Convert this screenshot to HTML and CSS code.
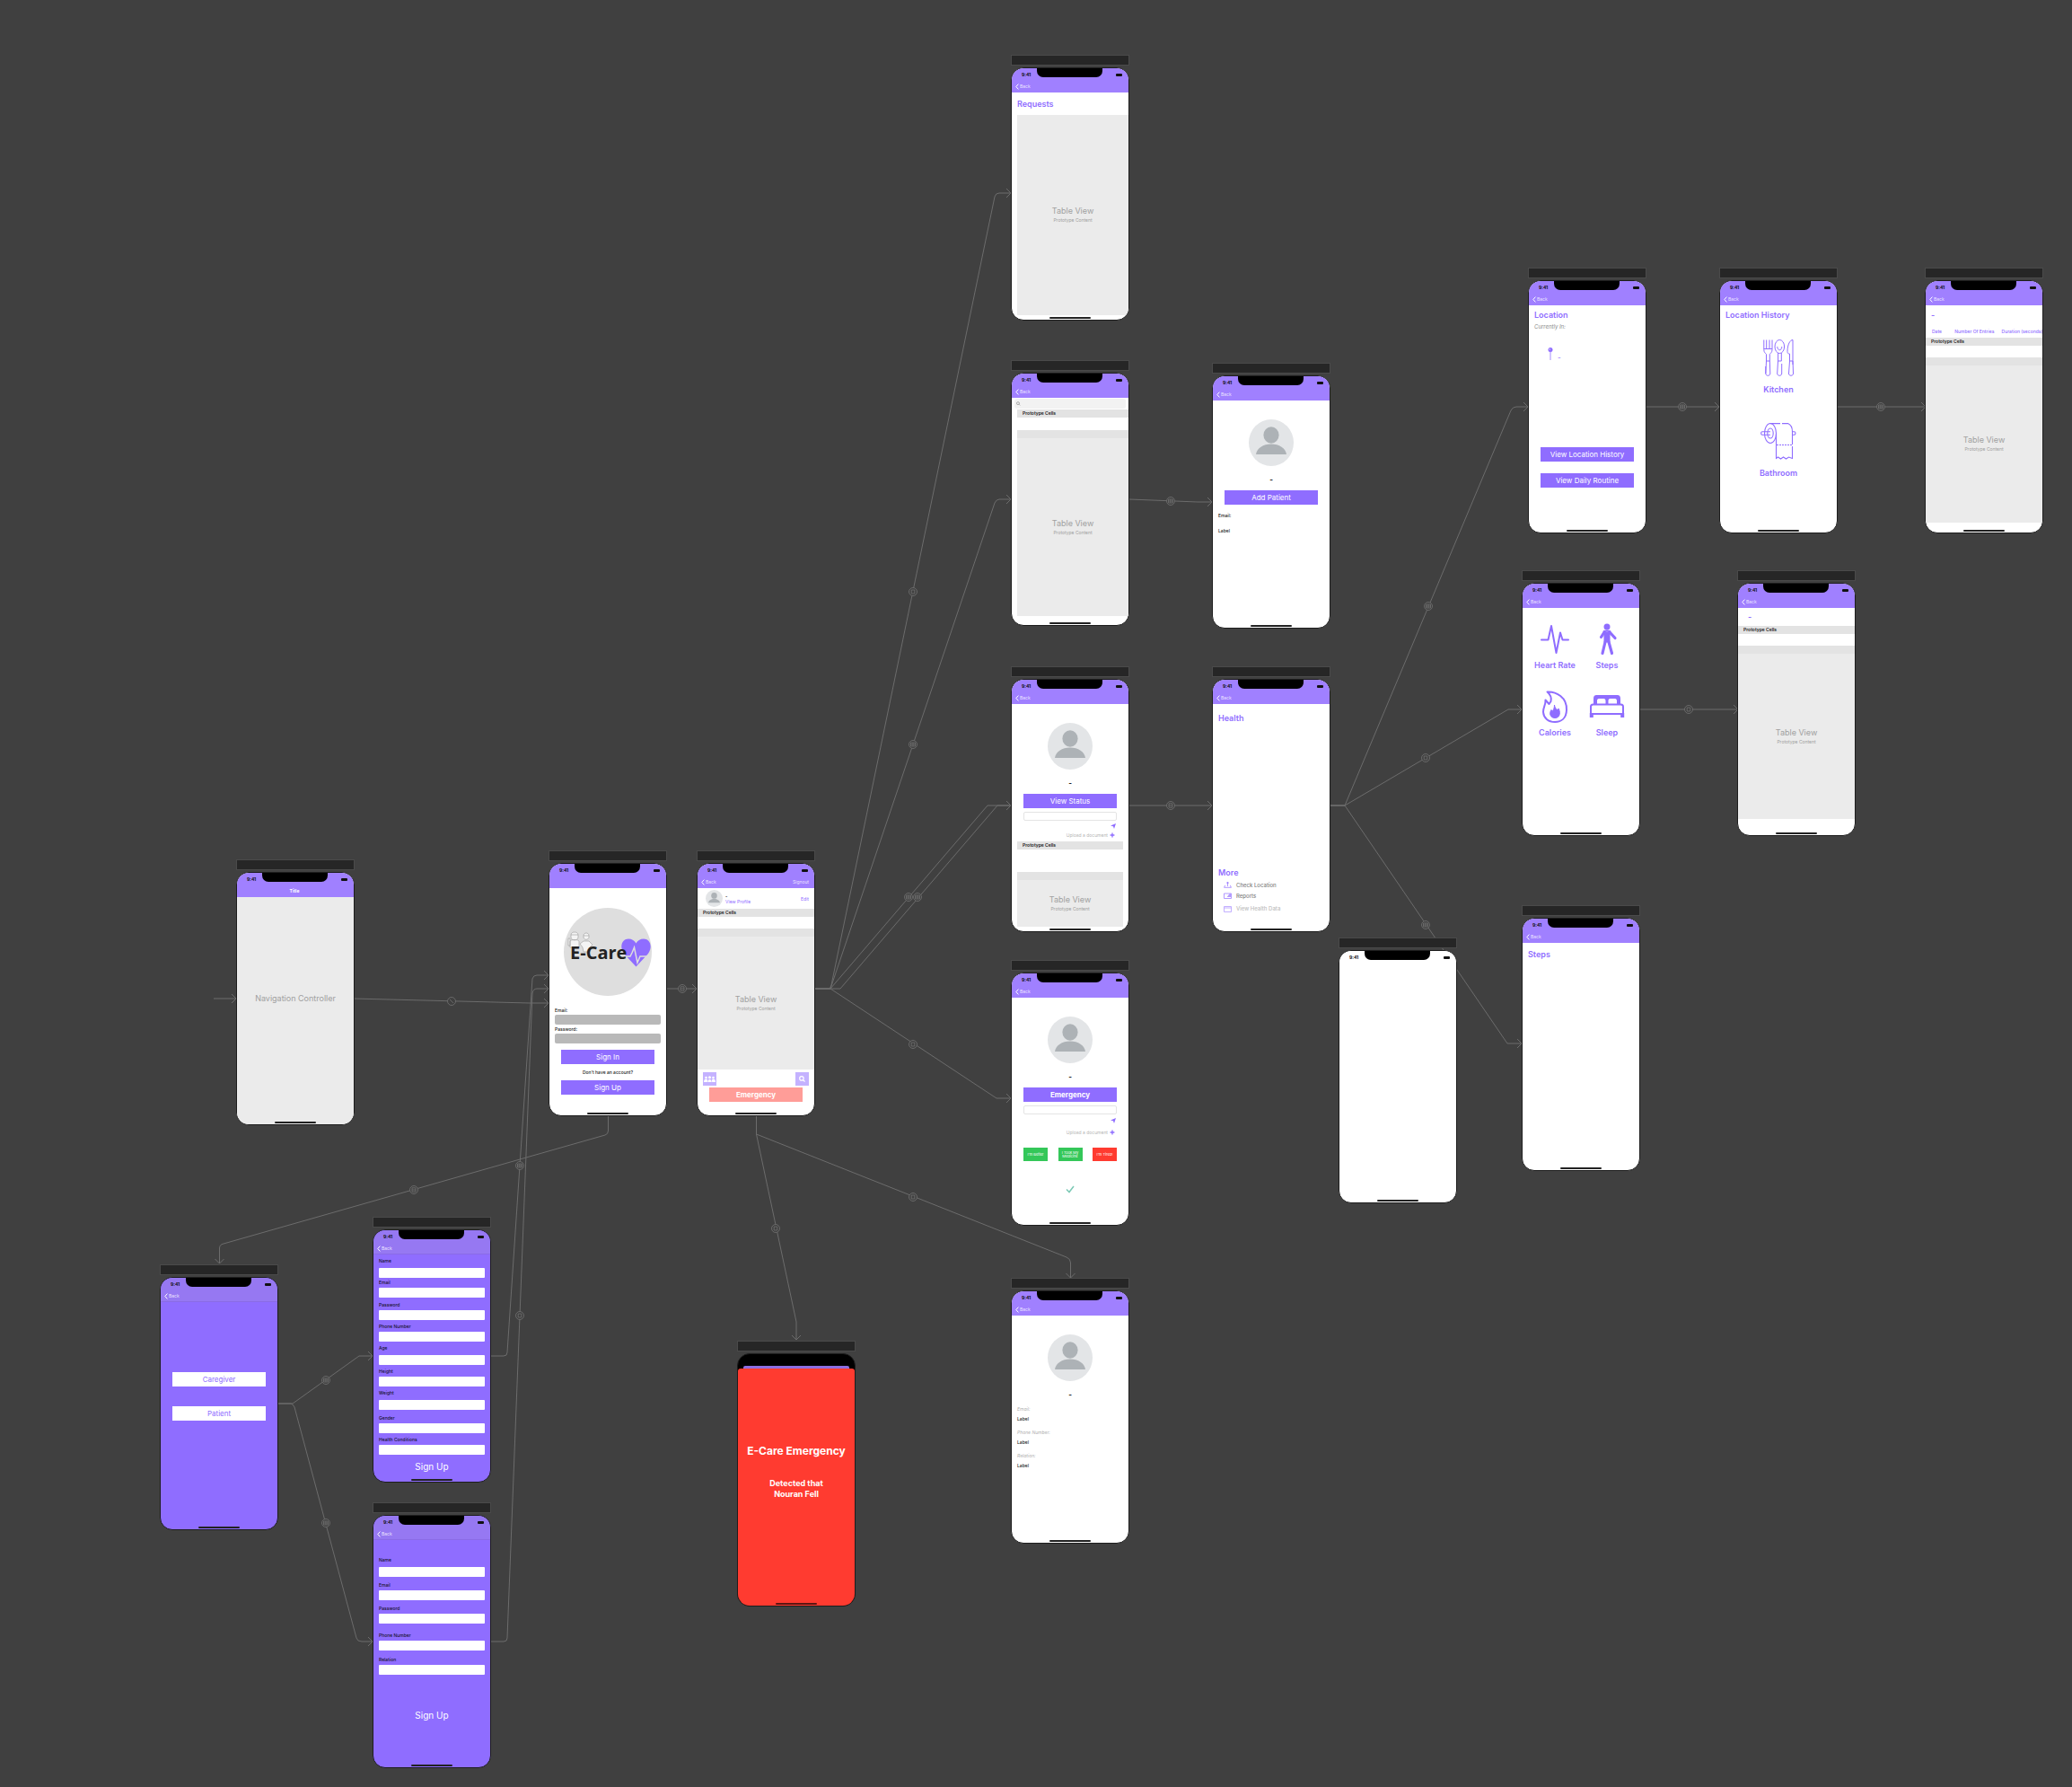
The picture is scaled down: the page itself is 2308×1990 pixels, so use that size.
FILE: index.html
```html
<!DOCTYPE html>
<html lang="en">
<head>
<meta charset="utf-8">
<title>E-Care Storyboard</title>
<link rel="stylesheet" href="styles.css">
</head>
<body>
<svg class="defs" aria-hidden="true">
  <symbol id="i-back" viewBox="0 0 4 7"><path d="M3.4.6.8 3.5l2.6 2.9" fill="none" stroke="currentColor" stroke-width="1"/></symbol>
  <symbol id="i-avatar" viewBox="0 0 50 52" preserveAspectRatio="none">
    <ellipse cx="25" cy="26" rx="25" ry="26" fill="#e3e5e7"/>
    <ellipse cx="25" cy="17.500" rx="8.600" ry="9.200" fill="#adb2b6"/>
    <path d="M8 39c1-7 8-11.500 17-11.500S41 32 42 39z" fill="#adb2b6"/>
  </symbol>
  <symbol id="i-send" viewBox="0 0 6 6"><path d="M0 2.400 6 0 4 6 3 3.300z" fill="#8f6dff"/></symbol>
  <symbol id="i-plus" viewBox="0 0 6 6"><path d="M3 .6v4.800M.6 3h4.800" stroke="#8f6dff" stroke-width="1.300"/></symbol>
  <symbol id="i-search" viewBox="0 0 6 6"><g fill="none" stroke="currentColor"><circle cx="2.500" cy="2.500" r="1.900"/><path d="m3.900 3.900 1.700 1.700"/></g></symbol>
</svg>

<main class="canvas">
  <svg class="segues" aria-hidden="true">
    <defs>
      <marker id="arrow" viewBox="0 0 7 12" refX="6" refY="6" markerWidth="7" markerHeight="12" markerUnits="userSpaceOnUse" orient="auto"><path d="M1 1l5 5-5 5" fill="none" stroke="#6c6c6c"/></marker>
      <g id="grid-badge"><circle r="4.500" fill="#404040"/><path d="M-2.500-2h5v4h-5zM-2.500 0h5M0-2v4"/></g>
      <g id="list-badge"><circle r="4.500" fill="#404040"/><path d="M-2-2.200h4v4.400h-4zM-2 0h4"/></g>
      <g id="box-badge"><circle r="4.500" fill="#404040"/><path d="M-1.800-2h3.600v4h-3.600z"/></g>
      <g id="root-badge"><circle r="4.500" fill="#404040"/><path d="m-2-2 4 4"/></g>
    </defs>
    <g class="wires">
      <path d="M238 1112H263"/>
      <path d="M394 1112L590 1117H611"/>
      <path d="M547 1510H561Q565 1510 565 1506L593 1090Q594 1086 598 1086H611"/>
      <path d="M547 1828H561Q565 1828 565 1824L593 1106Q594 1101 598 1101H611"/>
      <path d="M743 1101H776"/>
      <path d="M677.500 1242V1259Q677.500 1263 674 1264L249 1385Q244.500 1386 244.500 1390V1407"/>
      <path d="M309 1563H326L400 1510H415"/>
      <path d="M309 1563H324Q326 1563 328 1567L397 1824Q398 1828 403 1828H415"/>
      <path d="M908 1101H923Q925 1101 926 1097L1108 219Q1109 215 1113 215H1126"/>
      <path d="M908 1101H925L1108 560Q1110 556 1113 556H1126"/>
      <path d="M908 1101H925L1100 897H1126"/>
      <path d="M908 1101H936L1111 897H1126"/>
      <path d="M908 1101H925L1110 1223H1126"/>
      <path d="M842.500 1242V1263L887 1472V1492"/>
      <path d="M842.500 1242V1263L1188 1400Q1192.500 1402 1192.500 1406V1423"/>
      <path d="M1258 556L1334 559H1350"/>
      <path d="M1258 897H1350"/>
      <path d="M1482 897H1498L1683 457Q1685 453 1689 453H1702"/>
      <path d="M1482 897H1498L1680 790H1695"/>
      <path d="M1482 897H1498L1679 1162H1695"/>
      <path d="M1833 453H1915"/>
      <path d="M2046 453H2145"/>
      <path d="M1826 790H1936"/>
    </g>
    <g class="badges">
      <use href="#root-badge" x="503" y="1115"/><use href="#grid-badge" x="579" y="1298"/><use href="#box-badge" x="579" y="1465"/>
      <use href="#list-badge" x="760" y="1101"/><use href="#list-badge" x="461" y="1325"/>
      <use href="#grid-badge" x="363" y="1537"/><use href="#grid-badge" x="363" y="1696"/>
      <use href="#box-badge" x="1017" y="659"/><use href="#grid-badge" x="1017" y="829"/>
      <use href="#grid-badge" x="1012" y="999"/><use href="#grid-badge" x="1022" y="999"/>
      <use href="#box-badge" x="1017" y="1163"/><use href="#box-badge" x="864" y="1368"/><use href="#box-badge" x="1017" y="1333"/>
      <use href="#grid-badge" x="1304" y="558"/><use href="#list-badge" x="1304" y="897"/>
      <use href="#grid-badge" x="1591" y="675"/><use href="#box-badge" x="1588" y="844"/><use href="#grid-badge" x="1588" y="1030"/>
      <use href="#grid-badge" x="1874" y="453"/><use href="#grid-badge" x="2095" y="453"/><use href="#box-badge" x="1881" y="790"/>
    </g>
  </svg>

  <section class="scene at-requests">
    <div class="dock"></div>
    <div class="phone">
      <header class="top"><div class="status"><span>9:41</span><i class="notch"></i><i class="battery"></i></div><nav><button class="back"><svg><use href="#i-back"/></svg>Back</button></nav></header>
      <div class="view requests">
        <h2>Requests</h2>
        <div class="table-view"><b>Table View</b><small>Prototype Content</small></div>
      </div>
    </div>
  </section>

  <section class="scene at-search">
    <div class="dock"></div>
    <div class="phone">
      <header class="top"><div class="status"><span>9:41</span><i class="notch"></i><i class="battery"></i></div><nav><button class="back"><svg><use href="#i-back"/></svg>Back</button></nav></header>
      <div class="view search">
        <label class="search-bar"><svg><use href="#i-search"/></svg><input type="search" aria-label="Search patients"></label>
        <p class="cells">Prototype Cells</p>
        <div class="table-view banded"><b>Table View</b><small>Prototype Content</small></div>
      </div>
    </div>
  </section>

  <section class="scene at-add">
    <div class="dock"></div>
    <div class="phone">
      <header class="top"><div class="status"><span>9:41</span><i class="notch"></i><i class="battery"></i></div><nav><button class="back"><svg><use href="#i-back"/></svg>Back</button></nav></header>
      <div class="view person add">
        <svg class="avatar"><use href="#i-avatar"/></svg>
        <p class="dash">-</p>
        <button class="action">Add Patient</button>
        <p class="note">Email:</p>
        <p class="note">Label</p>
      </div>
    </div>
  </section>

  <section class="scene at-status">
    <div class="dock"></div>
    <div class="phone">
      <header class="top"><div class="status"><span>9:41</span><i class="notch"></i><i class="battery"></i></div><nav><button class="back"><svg><use href="#i-back"/></svg>Back</button></nav></header>
      <div class="view person patient">
        <svg class="avatar"><use href="#i-avatar"/></svg>
        <p class="dash">-</p>
        <button class="action">View Status</button>
        <input class="message" type="text" aria-label="Message">
        <button class="send" aria-label="Send"><svg><use href="#i-send"/></svg></button>
        <button class="upload">Upload a document <svg><use href="#i-plus"/></svg></button>
        <p class="cells">Prototype Cells</p>
        <div class="table-view banded"><b>Table View</b><small>Prototype Content</small></div>
      </div>
    </div>
  </section>

  <section class="scene at-health">
    <div class="dock"></div>
    <div class="phone">
      <header class="top"><div class="status"><span>9:41</span><i class="notch"></i><i class="battery"></i></div><nav><button class="back"><svg><use href="#i-back"/></svg>Back</button></nav></header>
      <div class="view health">
        <h2>Health</h2>
        <h2>More</h2>
        <button class="more"><svg viewBox="0 0 9 7"><path d="M4.500 5V1.500M2 4.200H1.500L.6 6.300h7.800L7.500 4.200H7" fill="none" stroke="#a080ff" stroke-width=".8"/><circle cx="4.500" cy="1.200" r="1.100" fill="#a080ff"/></svg>Check Location</button>
        <button class="more"><svg viewBox="0 0 9 7"><path d="M.5 1h8v5.500h-8z" fill="none" stroke="#a080ff" stroke-width=".8"/><path d="M4 4.500 7 .8l1.500 1V5H4z" fill="#b49cff"/></svg>Reports</button>
        <button class="more faint"><svg viewBox="0 0 9 7"><path d="M.5.5h8v6h-8zM.5 2h8" fill="none" stroke="#b49cff" stroke-width=".8"/></svg>View Health Data</button>
      </div>
    </div>
  </section>

  <section class="scene at-emergency">
    <div class="dock"></div>
    <div class="phone">
      <header class="top"><div class="status"><span>9:41</span><i class="notch"></i><i class="battery"></i></div><nav><button class="back"><svg><use href="#i-back"/></svg>Back</button></nav></header>
      <div class="view person urgent">
        <svg class="avatar"><use href="#i-avatar"/></svg>
        <p class="dash">-</p>
        <button class="action strong">Emergency</button>
        <input class="message" type="text" aria-label="Message">
        <button class="send" aria-label="Send"><svg><use href="#i-send"/></svg></button>
        <button class="upload">Upload a document <svg><use href="#i-plus"/></svg></button>
        <div class="replies"><button>I'm Better</button><button>I Took My Medicine</button><button class="red">I'm Tired!</button></div>
        <svg class="check" viewBox="0 0 10 9"><path d="M1 4.500 4 7.500 9 1" fill="none" stroke="#7cc9b5" stroke-width="1.500"/></svg>
      </div>
    </div>
  </section>

  <section class="scene at-location">
    <div class="dock"></div>
    <div class="phone">
      <header class="top"><div class="status"><span>9:41</span><i class="notch"></i><i class="battery"></i></div><nav><button class="back"><svg><use href="#i-back"/></svg>Back</button></nav></header>
      <div class="view location">
        <h2>Location</h2>
        <p class="hint">Currently In:</p>
        <p class="pin"><svg viewBox="0 0 6 14"><circle cx="3" cy="2.600" r="2.500" fill="#8f6dff"/><path d="M3 5v9" stroke="#a68cff"/><circle cx="2.300" cy="2" r=".8" fill="#d5c8ff"/></svg>-</p>
        <button class="action">View Location History</button>
        <button class="action">View Daily Routine</button>
      </div>
    </div>
  </section>

  <section class="scene at-history">
    <div class="dock"></div>
    <div class="phone">
      <header class="top"><div class="status"><span>9:41</span><i class="notch"></i><i class="battery"></i></div><nav><button class="back"><svg><use href="#i-back"/></svg>Back</button></nav></header>
      <div class="view history">
        <h2>Location History</h2>
        <button class="place"><svg viewBox="0 0 34 41" width="34" height="41"><g fill="none" stroke="#8f6dff" stroke-width="1">
          <path d="M.8.5v11c0 3 2 4 2.700 5V24h3.800v-7.500c.700-1 2.700-2 2.700-5V.5M3.700.5V10M7 .5V10M.8 10.500H10M3.500 24 2.800 38c0 3 5 3 5 0L7.300 24M2.800 30v8"/>
          <ellipse cx="18.300" cy="8" rx="5.300" ry="7.500"/><path d="M15.800 8c0 5 5 5 5 0M16.600 15v9h3.700v-9M16.500 24l-.8 14c0 3 5 3 5 0V27"/>
          <path d="M33 .5c-3 0-6 5-6 13 0 2 1 2.500 2.500 2.500V24H33zM29.500 24l-1 14c0 3 5 3 5 0L33 24M33 24v4"/></g></svg>Kitchen</button>
        <button class="place"><svg viewBox="0 0 40 41" width="40" height="41"><g fill="none" stroke="#8f6dff" stroke-width="1.100">
          <ellipse cx="11" cy="11.500" rx="6.500" ry="11"/><ellipse cx="11" cy="11.500" rx="3.200" ry="5.500"/>
          <path d="M11 .6H22M24 .6h6.500C34 2 35.500 6 35.500 10v14M17.500 12v27.500l2-1.500 3 2 3-2 3 2 3-2 4 1.500V26"/><path d="M18 24.500h17" stroke-dasharray="2 1"/>
          <path d="M11 9.800H2c-1.800 0-1.800 3.400 0 3.400h9M35.500 9.800h2c2 0 2 3.400 0 3.400h-2"/></g></svg>Bathroom</button>
      </div>
    </div>
  </section>

  <section class="scene at-entries">
    <div class="dock"></div>
    <div class="phone">
      <header class="top"><div class="status"><span>9:41</span><i class="notch"></i><i class="battery"></i></div><nav><button class="back"><svg><use href="#i-back"/></svg>Back</button></nav></header>
      <div class="view entries">
        <h2>-</h2>
        <table><thead><tr><th>Date</th><th>Number Of Entries</th><th>Duration (seconds)</th></tr></thead></table>
        <p class="cells">Prototype Cells</p>
        <div class="table-view banded"><b>Table View</b><small>Prototype Content</small></div>
      </div>
    </div>
  </section>

  <section class="scene at-data">
    <div class="dock"></div>
    <div class="phone">
      <header class="top"><div class="status"><span>9:41</span><i class="notch"></i><i class="battery"></i></div><nav><button class="back"><svg><use href="#i-back"/></svg>Back</button></nav></header>
      <div class="view metrics">
        <button><svg viewBox="0 0 40 36"><path d="M5 18.500h7.500L16 3l5.500 30 4.500-22.500 2.500 8h6.500" fill="none" stroke="#8f6dff" stroke-width="2" stroke-linejoin="round" stroke-linecap="round"/></svg>Heart Rate</button>
        <button><svg viewBox="0 0 40 36"><circle cx="20" cy="4" r="3.500" fill="#8f6dff"/><path d="M16.500 9.500h7v12h-7z" fill="#8f6dff"/><path d="m17 10-3.500 5.500M23 10l6 6.500M18 21l-3 12.500M22 21l3.500 12.500" fill="none" stroke="#8f6dff" stroke-width="3.200" stroke-linecap="round"/><path d="M16 9.500c1-1.500 7-1.500 8 0" stroke="#8f6dff" stroke-width="2" fill="none"/></svg>Steps</button>
        <button><svg viewBox="0 0 40 36"><path d="M11.500 1.500c10-.5 22 6 21.500 20-.3 9-5.500 13.500-13 13.500S7.500 30.500 7 24c-.3-5 3-8 2.500-13.500l4 4.500 2-3c1-4-1-8-4-10.500z" fill="none" stroke="#8f6dff" stroke-width="2" stroke-linejoin="round"/><path d="M19.500 16c0 3 2 4 3.500 6l1-2c2 3 2.500 10.500-4 10.500-5.500 0-6.500-5.500-4-9l1 2c1.500-2 2.500-4 2.500-7.500z" fill="#8f6dff" stroke="#8f6dff"/></svg>Calories</button>
        <button><svg viewBox="0 0 40 36"><path d="M5 15V9c0-2.500 1-4 3.500-4h23C34 5 35 6.500 35 9v6zM9 15h9.500v-3.500c0-1.500-.8-2.500-2-2.500H11c-1.300 0-2 1-2 2.500zm12.500 0H31v-3.500c0-1.500-.8-2.500-2-2.500h-5.500c-1.300 0-2 1-2 2.500z" fill="#8f6dff" fill-rule="evenodd"/><path d="M2 29V18c0-1.500 1-2.500 2.500-2.500h31c1.500 0 2.500 1 2.500 2.500v11M2 26h36" fill="none" stroke="#8f6dff" stroke-width="2"/><path d="M.8 25h4v5h-4zM35.200 25h4v5h-4z" fill="#8f6dff"/></svg>Sleep</button>
      </div>
    </div>
  </section>

  <section class="scene at-records">
    <div class="dock"></div>
    <div class="phone">
      <header class="top"><div class="status"><span>9:41</span><i class="notch"></i><i class="battery"></i></div><nav><button class="back"><svg><use href="#i-back"/></svg>Back</button></nav></header>
      <div class="view records">
        <h2>-</h2>
        <p class="cells">Prototype Cells</p>
        <div class="table-view banded"><b>Table View</b><small>Prototype Content</small></div>
      </div>
    </div>
  </section>

  <section class="scene at-root">
    <div class="dock"></div>
    <div class="phone">
      <header class="top"><div class="status"><span>9:41</span><i class="notch"></i><i class="battery"></i></div><nav class="middle"><strong>Title</strong></nav></header>
      <div class="view root">Navigation Controller</div>
    </div>
  </section>

  <section class="scene at-signin">
    <div class="dock"></div>
    <div class="phone">
      <header class="top"><div class="status"><span>9:41</span><i class="notch"></i><i class="battery"></i></div><nav></nav></header>
      <form class="view signin">
        <svg class="logo" viewBox="0 0 98 98" role="img" aria-label="E-Care">
          <circle cx="49" cy="49" r="49" fill="#dedede"/>
          <g fill="#f4f4f4" stroke="#9a9a9a" stroke-width=".6">
            <path d="M8 30c0-4 8-4 8 0v3c-1 4-7 4-8 0zM7 44v-7c1-2 9-2 10 0v7zM5 34h2v8H5z"/>
            <path d="M22 31c0-4 6-4 6 0v2c-1 3-5 3-6 0zM21 44l-3-4 4-3h6l4 4-3 3v5h-7z"/>
            <path d="M8 30h8M22 31h6"/>
          </g>
          <path d="M80.500 65.500 67 51C61 42 66 34.500 72 34.500c4 0 7 2 8.500 5 1.500-3 4.500-5 8.500-5 6 0 11 7.500 5 16.500z" fill="#8f6dff"/>
          <path d="M66 54h8l2-4 2.500-6 3.500 17 3-7h7" fill="none" stroke="#dedede" stroke-width="1.500"/>
          <text x="7" y="57">E-Care</text>
        </svg>
        <label for="in-email">Email:</label><input id="in-email" type="email">
        <label for="in-pass">Password:</label><input id="in-pass" type="password">
        <button class="action" type="button">Sign In</button>
        <p>Don't have an account?</p>
        <button class="action" type="button">Sign Up</button>
      </form>
    </div>
  </section>

  <section class="scene at-home">
    <div class="dock"></div>
    <div class="phone">
      <header class="top"><div class="status"><span>9:41</span><i class="notch"></i><i class="battery"></i></div><nav><button class="back"><svg><use href="#i-back"/></svg>Back</button><button>Signout</button></nav></header>
      <div class="view home">
        <div class="me"><svg><use href="#i-avatar"/></svg><p>-<a href="#profile">View Profile</a></p><a href="#edit">Edit</a></div>
        <p class="cells">Prototype Cells</p>
        <div class="table-view banded"><b>Table View</b><small>Prototype Content</small></div>
        <div class="tools">
          <button aria-label="Requests"><svg viewBox="0 0 13 7" width="13" height="7"><g fill="#fff"><circle cx="6.500" cy="1.700" r="1.500"/><circle cx="2.500" cy="2" r="1.300"/><circle cx="10.500" cy="2" r="1.300"/><path d="M4.300 7c0-4 4.400-4 4.400 0zM0 7c0-4 4-4.500 4-1.500L3.800 7zM9.200 7 9 5.500c0-3 4-2.500 4 1.500z"/></g></svg></button>
          <button aria-label="Search"><svg width="7" height="7"><use href="#i-search"/></svg></button>
        </div>
        <button class="action strong alarm">Emergency</button>
      </div>
    </div>
  </section>

  <section class="scene at-role">
    <div class="dock"></div>
    <div class="phone violet">
      <header class="top"><div class="status"><span>9:41</span><i class="notch"></i><i class="battery"></i></div><nav><button class="back"><svg><use href="#i-back"/></svg>Back</button></nav></header>
      <div class="view role">
        <button class="action light">Caregiver</button>
        <button class="action light">Patient</button>
      </div>
    </div>
  </section>

  <section class="scene at-patient">
    <div class="dock"></div>
    <div class="phone violet">
      <header class="top"><div class="status"><span>9:41</span><i class="notch"></i><i class="battery"></i></div><nav><button class="back"><svg><use href="#i-back"/></svg>Back</button></nav></header>
      <form class="view signup nine">
        <p class="roomy"><label for="p-name">Name</label><input id="p-name"></p>
        <p><label for="p-email">Email</label><input id="p-email"></p>
        <p><label for="p-pass">Password</label><input id="p-pass" type="password"></p>
        <p><label for="p-phone">Phone Number</label><input id="p-phone"></p>
        <p class="roomy"><label for="p-age">Age</label><input id="p-age"></p>
        <p><label for="p-height">Height</label><input id="p-height"></p>
        <p class="roomy"><label for="p-weight">Weight</label><input id="p-weight"></p>
        <p><label for="p-gender">Gender</label><input id="p-gender"></p>
        <p><label for="p-cond">Health Conditions</label><input id="p-cond"></p>
        <button type="button">Sign Up</button>
      </form>
    </div>
  </section>

  <section class="scene at-caregiver">
    <div class="dock"></div>
    <div class="phone violet">
      <header class="top"><div class="status"><span>9:41</span><i class="notch"></i><i class="battery"></i></div><nav><button class="back"><svg><use href="#i-back"/></svg>Back</button></nav></header>
      <form class="view signup five">
        <p class="roomy"><label for="c-name">Name</label><input id="c-name"></p>
        <p><label for="c-email">Email</label><input id="c-email"></p>
        <p><label for="c-pass">Password</label><input id="c-pass" type="password"></p>
        <p><label for="c-phone">Phone Number</label><input id="c-phone"></p>
        <p><label for="c-rel">Relation</label><input id="c-rel"></p>
        <button type="button">Sign Up</button>
      </form>
    </div>
  </section>

  <section class="scene at-fall">
    <div class="dock"></div>
    <div class="phone modal">
      <div class="under"></div>
      <div class="sheet"><h1>E-Care Emergency</h1><p>Detected that<br>Nouran Fell</p></div>
    </div>
  </section>

  <section class="scene at-profile">
    <div class="dock"></div>
    <div class="phone">
      <header class="top"><div class="status"><span>9:41</span><i class="notch"></i><i class="battery"></i></div><nav><button class="back"><svg><use href="#i-back"/></svg>Back</button></nav></header>
      <div class="view person profile">
        <svg class="avatar"><use href="#i-avatar"/></svg>
        <p class="dash">-</p>
        <dl><dt>Email:</dt><dd>Label</dd><dt>Phone Number:</dt><dd>Label</dd><dt>Relation:</dt><dd>Label</dd></dl>
      </div>
    </div>
  </section>

  <section class="scene at-blank">
    <div class="dock"></div>
    <div class="phone plain">
      <header class="top"><div class="status"><span>9:41</span><i class="notch"></i><i class="battery"></i></div></header>
      <div class="view"></div>
    </div>
  </section>

  <section class="scene at-steps">
    <div class="dock"></div>
    <div class="phone">
      <header class="top"><div class="status"><span>9:41</span><i class="notch"></i><i class="battery"></i></div><nav><button class="back"><svg><use href="#i-back"/></svg>Back</button></nav></header>
      <div class="view requests"><h2>Steps</h2></div>
    </div>
  </section>
</main>
</body>
</html>
```
FILE: styles.css
```css
:root {
  --violet: #8f6dff;
  --bar: #a080ff;
}
* { box-sizing: border-box; margin: 0; padding: 0; }
body { background: #404040; font-family: Inter, "Liberation Sans", sans-serif; font-size: 5px; line-height: 6px; color: #222; }
button { border: 0; background: none; font: inherit; color: inherit; cursor: pointer; }
input { border: 0; font: inherit; width: 100%; min-width: 0; display: block; }
a { color: var(--violet); text-decoration: none; }
svg { display: block; }
.defs { position: absolute; width: 0; height: 0; }

/* Canvas and segues */
.canvas { position: relative; width: 100%; min-height: 100vh; overflow: hidden; }
.segues { position: absolute; inset: 0; width: 100%; height: 100%; }
.wires { fill: none; stroke: #6c6c6c; }
.wires path { marker-end: url(#arrow); }
.badges { fill: none; stroke: #727272; stroke-width: .8; }

/* Scene placement on the free canvas */
.scene { position: absolute; width: 132px; }
.at-requests { left: 1126px; top: 61px; }
.at-search { left: 1126px; top: 401px; }
.at-add { left: 1350px; top: 404px; }
.at-status { left: 1126px; top: 742px; }
.at-health { left: 1350px; top: 742px; }
.at-emergency { left: 1126px; top: 1069px; }
.at-location { left: 1702px; top: 298px; }
.at-history { left: 1915px; top: 298px; }
.at-entries { left: 2144px; top: 298px; }
.at-data { left: 1695px; top: 635px; }
.at-records { left: 1935px; top: 635px; }
.at-root { left: 263px; top: 957px; }
.at-signin { left: 611px; top: 947px; }
.at-home { left: 776px; top: 947px; }
.at-role { left: 178px; top: 1408px; }
.at-patient { left: 415px; top: 1355px; }
.at-caregiver { left: 415px; top: 1673px; }
.at-fall { left: 821px; top: 1493px; }
.at-profile { left: 1126px; top: 1423px; }
.at-blank { left: 1491px; top: 1044px; }
.at-steps { left: 1695px; top: 1008px; }

/* Device frame */
.dock { height: 12px; margin-bottom: 2px; background: #262626; border: 1px solid #4a4a4a; }
.phone { position: relative; display: flex; flex-direction: column; height: 282px; overflow: hidden; background: #fff; border: 1px solid #1d1d1d; border-radius: 14px; }
.phone::after { content: ""; position: absolute; bottom: 1px; left: 42px; width: 46px; height: 2px; border-radius: 1px; background: #222; }
.top { height: 27px; flex: none; background: var(--bar); }
.status { display: grid; grid-template-columns: 28px 73px 1fr; height: 13px; color: #111; }
.status span { padding: 4px 0 0 11px; font-weight: 700; white-space: nowrap; }
.notch { height: 10px; background: #000; border-radius: 0 0 7px 7px; }
.battery { width: 7px; height: 3px; margin: 6px 0 0 15px; border-radius: 1px; background: #111; }
.top nav { display: flex; justify-content: space-between; align-items: center; height: 14px; padding: 0 6px 0 4px; color: #ebe3ff; }
.top nav.middle { justify-content: center; color: #fff; }
.back { display: flex; align-items: center; gap: 1px; }
.back svg { width: 4px; height: 7px; color: #fff; }
.view { flex: 1; display: grid; align-content: start; min-height: 0; }

/* Shared parts */
h2 { padding-left: 6px; font-size: 9px; line-height: 12px; font-weight: 600; color: var(--violet); white-space: nowrap; }
.cells { padding-left: 6px; height: 9px; line-height: 9px; font-weight: 600; background: #e3e3e3; }
.table-view { display: flex; flex-direction: column; align-items: center; justify-content: center; gap: 1px; background: #ebebeb; color: #a0a0a0; }
.table-view b { font-size: 9px; line-height: 10px; font-weight: 400; }
.table-view small { font-size: 5px; line-height: 8px; }
.banded { border-top: 9px solid #e3e3e3; }
.action { height: 16px; margin: 0 13px; background: var(--violet); color: #fff; font-size: 8px; line-height: 16px; }
.strong { font-weight: 700; }
.light { background: #fff; color: var(--violet); }
.alarm { background: #ff9d98; }

/* Table screens */
.requests { grid-template-rows: 25px 1fr; align-content: stretch; align-items: stretch; }
.requests h2 { line-height: 25px; }
.requests .table-view { margin: 0 0 5px 6px; }
.search { grid-template-rows: 13px 23px 1fr; align-content: stretch; }
.search-bar { display: flex; align-items: center; gap: 2px; margin: 1px 3px; padding-left: 2px; border-radius: 3px; background: #f2f2f2; color: #999; }
.search-bar svg { width: 5px; height: 5px; }
.search-bar input { background: none; }
.search .cells { margin-left: 6px; }
.search .table-view { margin: 0 0 10px 6px; }
.entries { grid-template-rows: 22px 14px 22px 1fr; align-content: stretch; }
.entries h2 { line-height: 22px; }
.entries table { width: 100%; table-layout: fixed; border-collapse: collapse; }
.entries th { width: 25px; padding-left: 7px; font-weight: 500; text-align: left; white-space: nowrap; color: var(--violet); font-size: 5px; }
.entries th + th { width: 52px; }
.entries .table-view { margin-bottom: 11px; }
.records { grid-template-rows: 20px 22px 1fr; align-content: stretch; }
.records h2 { padding-left: 11px; line-height: 20px; }
.records .table-view { margin-bottom: 18px; }

/* Person screens */
.person { padding-top: 21px; grid-auto-rows: auto; align-content: stretch; }
.avatar { width: 50px; height: 52px; justify-self: center; }
.dash { text-align: center; font-size: 8px; line-height: 23px; font-weight: 700; }
.message { justify-self: center; align-self: end; width: 104px; height: 10px; border: 1px solid #e4e4e4; border-radius: 2px; }
.send { justify-self: end; margin-right: 14px; }
.send svg, .upload svg { width: 6px; height: 6px; }
.upload { display: flex; align-items: center; justify-self: end; gap: 2px; margin-right: 15px; color: #b5b5b5; }
.add { grid-template-rows: 56px 23px 16px 23px 12px; align-content: start; }
.note { padding-left: 6px; align-self: center; font-weight: 500; }
.patient { grid-template-rows: 56px 23px 16px 14px 11px 9px 37px 1fr; padding-bottom: 5px; }
.patient .cells { margin: 3px 6px 0; }
.patient .table-view { margin: 0 6px; }
.urgent { grid-template-rows: 56px 23px 16px 14px 14px 11px 27px 62px; align-content: start; }
.replies { display: flex; justify-content: space-between; align-items: flex-end; margin: 0 13px; }
.replies button { width: 27px; height: 15px; padding: 0 2px; background: #34c759; color: #fff; font-size: 4px; line-height: 4px; white-space: normal; }
.replies .red { background: #ff3b30; }
.check { width: 10px; height: 9px; place-self: center; }
.profile { grid-template-rows: 56px 21px auto; align-content: start; }
.profile dl { display: grid; grid-template-rows: repeat(3, 12px 14px); padding-left: 6px; align-items: center; }
dt { font-style: italic; color: #b0b0b0; }
dd { align-self: start; padding-top: 2px; font-weight: 500; }

/* Health and location */
.health { grid-template-rows: 32px 164px 11px 13px 16px; align-content: start; align-items: end; }
.health h2 { align-self: end; }
.health h2:first-child { line-height: 32px; }
.health h2 + h2 { line-height: 16px; }
.more { display: flex; align-items: center; gap: 5px; padding-left: 12px; font-size: 6px; line-height: 8px; font-weight: 500; color: #808080; align-self: center; }
.more svg { width: 9px; height: 7px; }
.faint { color: #bcbcbc; }
.location { grid-template-rows: 22px 6px 33px 113px 29px; align-items: end; }
.location h2, .history h2 { line-height: 22px; }
.hint { padding-left: 6px; font-style: italic; color: #888; font-size: 6px; line-height: 8px; }
.pin { display: flex; align-items: flex-end; gap: 5px; padding-left: 21px; font-size: 8px; line-height: 6px; color: var(--violet); }
.pin svg { width: 6px; height: 14px; }
.history { grid-template-rows: 38px 93px auto; }
.place { display: flex; flex-direction: column; align-items: center; gap: 9px; font-size: 9px; line-height: 12px; font-weight: 600; color: var(--violet); }
.metrics { grid-template-columns: 58px 58px; justify-content: center; padding-top: 17px; row-gap: 22px; }
.metrics button { display: flex; flex-direction: column; align-items: center; gap: 4px; font-size: 9px; line-height: 13px; font-weight: 600; color: var(--violet); white-space: nowrap; }
.metrics svg { width: 40px; height: 36px; }

/* Entry and home */
.root { align-content: center; justify-content: center; padding-bottom: 28px; background: #ebebeb; font-size: 9px; color: #a0a0a0; }
.signin { grid-template-rows: 131px 10px 11px 10px 11px 23px 18px 16px; align-items: end; }
.signin label { padding-left: 6px; line-height: 9px; font-weight: 500; align-self: center; }
.signin input { justify-self: center; width: 118px; height: 11px; border-radius: 2px; background: #b9b9b9; }
.signin p { text-align: center; align-self: center; font-weight: 500; }
.logo { width: 98px; height: 98px; place-self: center; margin-top: 10px; }
.logo text { font-family: "Open Sans", sans-serif; font-size: 20px; font-weight: 700; fill: #222; }
.home { grid-template-rows: 23px 22px 157px 20px 16px; }
.me { display: flex; align-items: center; gap: 3px; padding: 0 6px 0 9px; }
.me svg { width: 19px; height: 19px; }
.me p { flex: 1; display: flex; flex-direction: column; font-weight: 700; }
.me a { font-weight: 400; }
.tools { display: flex; justify-content: space-between; align-items: center; padding: 0 6px; }
.tools button { display: grid; place-items: center; width: 15px; height: 15px; background: #c4b2ff; color: #fff; }

/* Violet screens */
.violet { background: var(--violet); color: #17122b; }
.violet .top { background: #9678f2; border-bottom: 1px solid #8a6be6; }
.role { padding-top: 78px; row-gap: 22px; }
.signup { padding: 0 6px; }
.signup p { display: flex; flex-direction: column; justify-content: flex-end; gap: 3px; }
.signup .roomy { gap: 5px; }
.signup label { font-weight: 500; }
.signup input { height: 11px; border-radius: 1px; background: #fff; }
.signup button { color: #fff; font-size: 10px; line-height: 12px; align-self: center; }
.nine { grid-template-rows: 26px 22px 25px 24px 26px 24px 26px 26px 24px 26px; }
.five { grid-template-rows: 41px 26px 26px 30px 27px 90px; }

/* Fall alert */
.modal { background: #000; color: #fff; padding-top: 13px; text-align: center; }
.under { height: 3px; margin: 0 6px; border-radius: 2px 2px 0 0; background: #8c6de0; }
.sheet { flex: 1; padding-top: 84px; border-radius: 3px 3px 0 0; background: #ff3b30; }
.sheet h1 { font-size: 12px; line-height: 16px; font-weight: 700; white-space: nowrap; }
.sheet p { padding-top: 22px; font-size: 9px; line-height: 12px; font-weight: 700; }
.modal::after { background: #5c1512; }

/* Blank scene */
.plain .top { height: 13px; background: #fff; }
```
